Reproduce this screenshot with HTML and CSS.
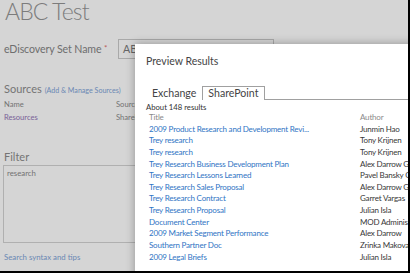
FILE: index.html
```html
<!DOCTYPE html>
<html>
<head>
    <title>ABC Test</title>
    <link rel="stylesheet" href="styles.css">
</head>
<body>
    <div class="frame">
        <div class="page">
            <h1>ABC Test</h1>

            <div class="field">
                <label>eDiscovery Set Name <span class="req">*</span></label>
                <div class="name-box">ABC Test</div>
            </div>

            <h2>Sources <a href="#">(Add &amp; Manage Sources)</a></h2>
            <div class="sources">
                <span>Name</span><span>Source</span>
                <a href="#" class="res">Resources</a><span>SharePoint</span>
            </div>

            <h2 class="filter-title">Filter</h2>
            <div class="filter-box">research</div>
            <a href="#" class="tips">Search syntax and tips</a>
        </div>

        <!-- modal dialog on top of the page -->
        <div class="dialog">
            <div class="dialog-title">Preview Results</div>
            <div class="tabs">
                <span class="tab">Exchange</span>
                <span class="tab active">SharePoint</span>
                <span class="tab-rest"></span>
            </div>
            <div class="count">About 148 results</div>
            <div class="results">
                <div class="col-head">Title</div><div class="col-head">Author</div>
                <a href="#">2009 Product Research and Development Revi...</a><span>Junmin Hao</span>
                <a href="#">Trey research</a><span>Tony Krijnen</span>
                <a href="#">Trey research</a><span>Tony Krijnen</span>
                <a href="#">Trey Research Business Development Plan</a><span>Alex Darrow Garret Vargas</span>
                <a href="#">Trey Research Lessons Learned</a><span>Pavel Bansky Garret Vargas</span>
                <a href="#">Trey Research Sales Proposal</a><span>Alex Darrow Garret Vargas</span>
                <a href="#">Trey Research Contract</a><span>Garret Vargas</span>
                <a href="#">Trey Research Proposal</a><span>Julian Isla</span>
                <a href="#">Document Center</a><span>MOD Administrator</span>
                <a href="#">2009 Market Segment Performance</a><span>Alex Darrow</span>
                <a href="#">Southern Partner Doc</a><span>Zrinka Makovac</span>
                <a href="#">2009 Legal Briefs</a><span>Julian Isla</span>
            </div>
        </div>
    </div>
</body>
</html>
```

FILE: styles.css
```css
/* page behind a modal, dimmed */
body {
    margin: 0;
    font-family: Lato, "Open Sans", sans-serif;
    background-color: #d5d5d5;
}

.frame {
    position: relative;
    width: 408px;
    height: 271px;
    overflow: hidden;
    border-right: 2px solid #000;
    border-bottom: 2px solid #000;
    background-color: #d5d5d5;
}

.page {
    padding-left: 4px;
    color: #727272;
}

h1 {
    margin: 0;
    padding-left: 1px;
    font-size: 23px;
    font-weight: 300;
    line-height: 23px;
    letter-spacing: -0.9px;
    color: #7c7c7c;
}

.field {
    display: flex;
    align-items: center;
    margin-top: 16px;
    height: 20px;
}

.field label {
    width: 114px;
    font-size: 10.6px;
    letter-spacing: -0.1px;
    color: #6e6e6e;
}

.req {
    color: #b85a5a;
    font-size: 8px;
    vertical-align: top;
}

.name-box {
    width: 150px;
    height: 18px;
    line-height: 18px;
    padding-left: 4px;
    border: 1px solid #a9a9a9;
    font-size: 10.6px;
    color: #666;
}

h2 {
    margin: 23px 0 0;
    font-size: 11px;
    font-weight: 400;
    line-height: 14px;
    color: #747474;
}

h2 a {
    font-size: 7.1px;
    color: #6a88b4;
    text-decoration: none;
}

.sources {
    display: grid;
    grid-template-columns: 112px 60px;
    font-size: 7.6px;
    line-height: 13px;
    color: #727272;
}

.sources .res {
    color: #7a6298;
    text-decoration: none;
}

.filter-title {
    margin-top: 26px;
}

.filter-box {
    height: 72px;
    margin: 1px 0 0 -1px;
    padding: 2px 3px;
    border: 1px solid #b0b0b0;
    font-size: 7.8px;
    line-height: 10px;
    color: #727272;
}

.tips {
    display: block;
    margin-top: 9px;
    font-size: 7.8px;
    line-height: 10px;
    color: #6a88b4;
    text-decoration: none;
}

/* dialog */
.dialog {
    position: absolute;
    left: 135px;
    top: 44px;
    width: 290px;
    height: 240px;
    padding-left: 11px;
    background-color: #fff;
    box-shadow: 0 0 9px rgba(0, 0, 0, 0.32);
    color: #444;
}

.dialog-title {
    margin-top: 10px;
    font-size: 10.5px;
    line-height: 14px;
    color: #444;
}

.tabs {
    display: flex;
    margin-top: 18px;
}

.tab {
    padding: 1px 6px 0 6px;
    font-size: 10.6px;
    line-height: 13px;
    color: #444;
}

.tab.active {
    padding: 0 5px;
    border: 1px solid #a0a0a0;
    border-bottom: 0;
}

.tab-rest {
    flex: 1;
    border-bottom: 1px solid #a0a0a0;
}

.count {
    margin-top: 2px;
    font-size: 7.7px;
    line-height: 10px;
    color: #333;
}

.results {
    display: grid;
    grid-template-columns: 211px 80px;
    grid-auto-rows: 11.65px;
    margin-left: 3px;
    font-size: 8px;
    line-height: 11.65px;
    letter-spacing: -0.2px;
    white-space: nowrap;
}

.results a {
    color: #2f74c4;
    text-decoration: none;
}

.results span {
    color: #383838;
}

.col-head {
    margin-bottom: 6px;
    color: #8a8a8a;
}
```
